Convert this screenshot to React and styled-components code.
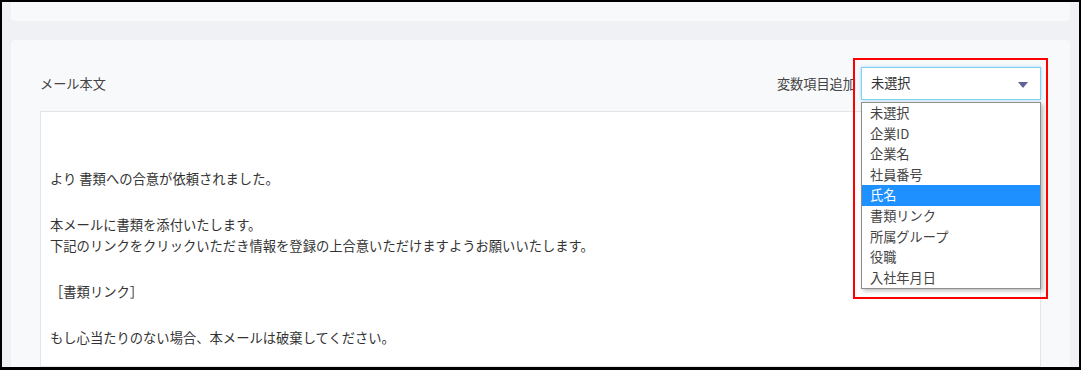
import React from 'react';
import styled, { createGlobalStyle } from 'styled-components';

const GlobalStyle = createGlobalStyle`
  html, body {
    margin: 0;
    padding: 0;
    background: #000;
  }
  body {
    font-family: "Noto Sans CJK JP", "Noto Sans", sans-serif;
    color: #333;
  }
`;

const options = ['未選択', '企業ID', '企業名', '社員番号', '氏名', '書類リンク', '所属グループ', '役職', '入社年月日'];

const bodyText = [
  ['より 書類への合意が依頼されました。'],
  ['本メールに書類を添付いたします。', '下記のリンクをクリックいただき情報を登録の上合意いただけますようお願いいたします。'],
  ['［書類リンク］'],
  ['もし心当たりのない場合、本メールは破棄してください。'],
];

const App = () => {
  return (
    <Frame>
      <GlobalStyle />
      <TopCard />
      <Card>
        <HeaderRow>
          <Label>メール本文</Label>
          <VariableField>
            <Label>変数項目追加</Label>
            <SelectWrap>
              <Select>
                <span>未選択</span>
                <Arrow />
              </Select>
              <OptionList>
                {options.map((o) => (
                  <OptionItem key={o} selected={o === '氏名'}>{o}</OptionItem>
                ))}
              </OptionList>
              <Highlight />
            </SelectWrap>
          </VariableField>
        </HeaderRow>
        <BodyBox>
          {bodyText.map((lines, i) => (
            <Paragraph key={i}>
              {lines.map((l) => (
                <Line key={l}>{l}</Line>
              ))}
            </Paragraph>
          ))}
        </BodyBox>
      </Card>
    </Frame>
  );
};

const Frame = styled.div`
  box-sizing: border-box;
  width: 1081px;
  height: 370px;
  border: 2px solid #000;
  border-bottom-width: 3px;
  background: #eff1f5;
  padding: 0 9px;
  overflow: hidden;
  display: flex;
  flex-direction: column;
  gap: 19px;
`;

const TopCard = styled.div`
  height: 19px;
  flex-shrink: 0;
  background: #f8f9fb;
  border-radius: 0 0 4px 4px;
`;

const Card = styled.div`
  flex: 1;
  background: #f8f9fb;
  border-radius: 4px 4px 0 0;
  padding: 27px 29px 0;
  display: flex;
  flex-direction: column;
  gap: 11px;
`;

const HeaderRow = styled.div`
  display: flex;
  justify-content: space-between;
  align-items: center;
  height: 33px;
`;

const Label = styled.span`
  font-size: 13.2px;
  color: #444;
  line-height: 20px;
`;

const VariableField = styled.div`
  display: flex;
  align-items: center;
  gap: 5px;
`;

const SelectWrap = styled.div`
  position: relative;
  width: 180px;
`;

const Select = styled.div`
  box-sizing: border-box;
  height: 33px;
  display: flex;
  align-items: center;
  justify-content: space-between;
  padding: 0 12px 0 9px;
  background: #fff;
  border: 1px solid #80d3ef;
  box-shadow: 0 0 3px rgba(110, 200, 240, 0.6);
  font-size: 13.2px;
  color: #333;
  line-height: 20px;
  padding-bottom: 2px;
`;

const Arrow = styled.span`
  width: 0;
  height: 0;
  border-left: 5px solid transparent;
  border-right: 5px solid transparent;
  border-top: 6px solid #5f6294;
  margin-top: 4px;
`;

const OptionList = styled.ul`
  position: absolute;
  top: calc(100% + 2px);
  left: 0;
  box-sizing: border-box;
  width: 180px;
  margin: 0;
  padding: 0;
  list-style: none;
  background: #fff;
  border: 1px solid #8d8d8d;
  box-shadow: 2px 2px 4px rgba(0, 0, 0, 0.25);
  z-index: 2;
`;

const OptionItem = styled.li`
  height: 20.6px;
  line-height: 19px;
  padding-left: 8px;
  font-size: 13.2px;
  color: ${(p) => (p.selected ? '#fff' : '#444')};
  background: ${(p) => (p.selected ? '#1e90ff' : 'transparent')};
`;

const Highlight = styled.div`
  position: absolute;
  left: -8px;
  top: -9px;
  width: 195px;
  height: 241px;
  box-sizing: border-box;
  border: 2px solid #ff0000;
  pointer-events: none;
  z-index: 3;
`;

const BodyBox = styled.div`
  flex: 1;
  background: #fff;
  border: 1px solid #e4e5e8;
  padding: 56px 9px 0;
  display: flex;
  flex-direction: column;
  gap: 25px;
`;

const Paragraph = styled.div`
  display: flex;
  flex-direction: column;
`;

const Line = styled.div`
  font-size: 13.3px;
  line-height: 21px;
  color: #333;
  white-space: nowrap;
`;

export default App;
